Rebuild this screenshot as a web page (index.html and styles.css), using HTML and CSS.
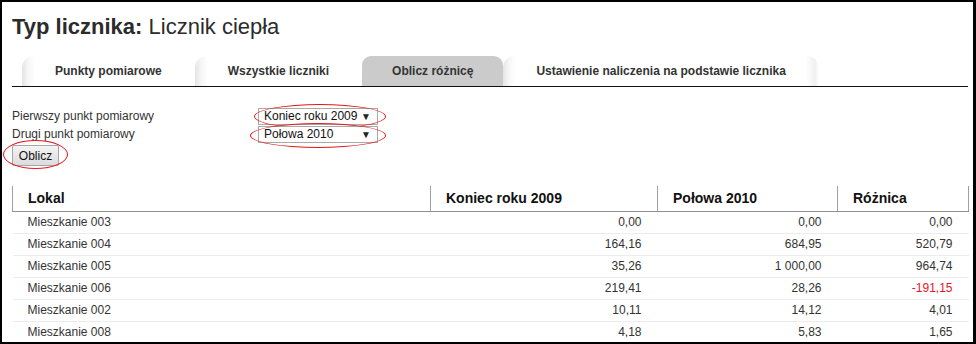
FILE: index.html
```html
<!DOCTYPE html>
<html lang="pl">
<head>
<meta charset="utf-8">
<title>Typ licznika</title>
<link rel="stylesheet" href="styles.css">
</head>
<body>
<div class="page">
  <h1 class="title"><b>Typ licznika:</b> Licznik ciepła</h1>
  <ul class="tabs">
    <li class="tab">Punkty pomiarowe</li>
    <li class="tab">Wszystkie liczniki</li>
    <li class="tab tab-active">Oblicz różnicę</li>
    <li class="tab tab-last">Ustawienie naliczenia na podstawie licznika</li>
  </ul>
  <div class="form">
    <div class="form-row">
      <span class="label">Pierwszy punkt pomiarowy</span>
      <span class="mark mark-s1"><span class="select">Koniec roku 2009<span class="arrow">▼</span></span></span>
    </div>
    <div class="form-row">
      <span class="label">Drugi punkt pomiarowy</span>
      <span class="mark mark-s2"><span class="select">Połowa 2010<span class="arrow">▼</span></span></span>
    </div>
    <span class="mark mark-btn"><button class="btn" type="button">Oblicz</button></span>
  </div>
  <table class="grid">
    <colgroup>
      <col class="c1"><col class="c2"><col class="c3"><col class="c4">
    </colgroup>
    <thead>
      <tr><th>Lokal</th><th>Koniec roku 2009</th><th>Połowa 2010</th><th>Różnica</th></tr>
    </thead>
    <tbody>
      <tr><td>Mieszkanie 003</td><td class="num">0,00</td><td class="num">0,00</td><td class="num">0,00</td></tr>
      <tr><td>Mieszkanie 004</td><td class="num">164,16</td><td class="num">684,95</td><td class="num">520,79</td></tr>
      <tr><td>Mieszkanie 005</td><td class="num">35,26</td><td class="num">1 000,00</td><td class="num">964,74</td></tr>
      <tr><td>Mieszkanie 006</td><td class="num">219,41</td><td class="num">28,26</td><td class="num neg">-191,15</td></tr>
      <tr><td>Mieszkanie 002</td><td class="num">10,11</td><td class="num">14,12</td><td class="num">4,01</td></tr>
      <tr><td>Mieszkanie 008</td><td class="num">4,18</td><td class="num">5,83</td><td class="num">1,65</td></tr>
    </tbody>
  </table>
</div>
</body>
</html>
```

FILE: styles.css
```css
* { box-sizing: border-box; }
html, body { margin: 0; padding: 0; background: #fff; }
body {
  font-family: "Liberation Sans", Arial, sans-serif;
  color: #333;
}
.page {
  width: 976px;
  height: 344px;
  overflow: hidden;
  border: 2px solid #000;
  border-right-width: 3px;
  padding: 12px 5px 0 10px;
}
.title {
  margin: 0;
  font-size: 22px;
  line-height: 26px;
  font-weight: normal;
  color: #2b2b2b;
}
.title b { font-weight: bold; }

.tabs {
  list-style: none;
  margin: 16px 0 0 0;
  padding: 0 0 0 10px;
  display: flex;
  border-bottom: 1px solid #111;
}
.tab {
  height: 30px;
  line-height: 30px;
  padding: 0 33px;
  font-size: 12px;
  font-weight: bold;
  color: #333;
  border-radius: 12px 12px 0 0;
  background: linear-gradient(to right, #e4e4e4 0, #f6f6f6 6px, #fff 13px, #fff 100%);
}
.tab-active {
  padding: 0 30px;
  background: #cbcbcb;
  border-radius: 9px 9px 0 0;
}
.tab-last {
  background: linear-gradient(to right, #e4e4e4 0, #f6f6f6 6px, #fff 13px, #fff calc(100% - 13px), #f0f0f0 calc(100% - 4px), #fff 100%);
}

.form {
  margin-top: 20px;
  font-size: 12px;
}
.form-row {
  display: grid;
  grid-template-columns: 246px auto;
  align-items: center;
  height: 18px;
}
.label { line-height: 14px; }
.mark {
  position: relative;
  display: inline-block;
  justify-self: start;
}
.mark::after {
  content: "";
  position: absolute;
  border: 1px solid #e01b1b;
  border-radius: 50%;
  pointer-events: none;
}
.mark-s1::after { top: -4px; right: -8px; bottom: -4px; left: -4px; }
.mark-s2::after { top: -3px; right: -8px; bottom: -5px; left: -8px; }
.mark-btn { margin-top: 2px; }
.mark-btn::after { top: -5px; right: -9px; bottom: -3px; left: -9px; }

.select {
  display: flex;
  align-items: center;
  justify-content: space-between;
  width: 120px;
  height: 17px;
  border: 1px solid #a9a9a9;
  background: #fff;
  padding: 0 6px 0 5px;
  font-size: 12px;
  color: #111;
}
.arrow { font-size: 10px; color: #222; }

.btn {
  display: block;
  width: 47px;
  height: 21px;
  padding: 0;
  font-family: "Liberation Sans", Arial, sans-serif;
  font-size: 12px;
  color: #111;
  border: 1px solid #a6a6a6;
  border-radius: 2px;
  background: linear-gradient(#f4f4f4, #dcdcdc);
}

.grid {
  margin-top: 20px;
  width: 956px;
  border-collapse: collapse;
  table-layout: fixed;
  font-size: 12px;
}
.c1 { width: 418px; }
.c2 { width: 227px; }
.c3 { width: 180px; }
.c4 { width: 131px; }
.grid th {
  height: 25px;
  padding: 0 15px;
  text-align: left;
  font-size: 14px;
  font-weight: bold;
  color: #111;
  border-left: 1px solid #a0a0a0;
  border-right: 1px solid #a0a0a0;
  border-bottom: 1px solid #909090;
}
.grid td {
  height: 22px;
  padding: 0 15px;
  border-bottom: 1px solid #ececec;
  color: #333;
}
.grid td.num { text-align: right; padding-right: 16px; }
.grid td.neg { color: #e8132a; }
```
